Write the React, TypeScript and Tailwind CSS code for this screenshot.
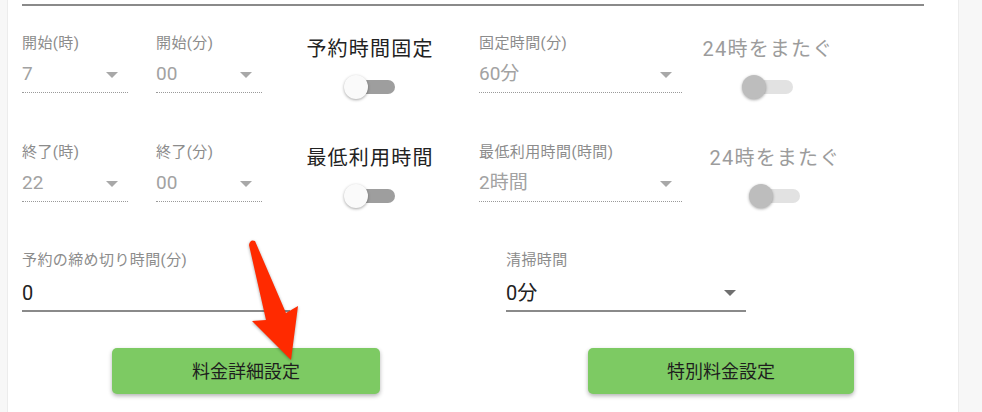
import React from "react";

const font = "font-['Roboto','Noto_Sans_CJK_JP',sans-serif]";

function Caret({ dark }: { dark?: boolean }) {
  return (
    <svg width="12" height="6" viewBox="0 0 12 6" className="mr-[10px] shrink-0">
      <path d="M0 0h12L6 6z" fill={dark ? "#6f6f6f" : "#a8a8a8"} />
    </svg>
  );
}

function DisabledSelect({ label, value, width }: { label: string; value: string; width: string }) {
  return (
    <div className={width}>
      <div className="text-[15px] leading-[16px] tracking-[0.4px] text-[#8c8c8c]">{label}</div>
      <div className="mt-[6px] flex h-[36px] items-center justify-between border-b border-dotted border-[#9a9a9a]">
        <span className="text-[19px] text-[#a2a2a2]">{value}</span>
        <Caret />
      </div>
    </div>
  );
}

function Switch({ disabled }: { disabled?: boolean }) {
  return (
    <div className="relative h-[26px] w-[52px]">
      <div
        className={`absolute left-[6px] top-[6px] h-[14px] w-[45px] rounded-full ${
          disabled ? "bg-[#e2e2e2]" : "bg-[#9e9e9e]"
        }`}
      />
      <div
        className={`absolute left-0 top-[1px] h-[24px] w-[24px] rounded-full shadow-[0_1px_3px_rgba(0,0,0,0.35)] ${
          disabled ? "bg-[#bdbdbd]" : "bg-[#fafafa]"
        }`}
      />
    </div>
  );
}

function ToggleGroup({ title, disabled, className }: { title: string; disabled?: boolean; className: string }) {
  return (
    <div className={`flex w-[160px] flex-col items-center ${className}`}>
      <div
        className={`mt-[2px] text-[20px] leading-[24px] tracking-[1.2px] ${
          disabled ? "text-[#9c9c9c]" : "text-[#222]"
        }`}
      >
        {title}
      </div>
      <div className="mt-[13px]">
        <Switch disabled={disabled} />
      </div>
    </div>
  );
}

export default function App() {
  return (
    <div className={`relative flex h-[412px] w-[982px] overflow-hidden bg-[#f7f7f7] ${font}`}>
      <div className="ml-[7px] w-[952px] border-x border-[#ececec] bg-white pl-[14px]">
        <div className="mt-[4px] h-[2px] w-[902px] bg-[#8a8a8a]" />

        <div className="mt-[29px] flex h-[109px] items-start">
          <DisabledSelect label="開始(時)" value="7" width="w-[106px]" />
          <div className="ml-[28px]">
            <DisabledSelect label="開始(分)" value="00" width="w-[106px]" />
          </div>
          <ToggleGroup title="予約時間固定" className="ml-[28px]" />
          <div className="ml-[29px]">
            <DisabledSelect label="固定時間(分)" value="60分" width="w-[203px]" />
          </div>
          <ToggleGroup title="24時をまたぐ" disabled className="ml-[6px]" />
        </div>

        <div className="flex h-[108px] items-start">
          <DisabledSelect label="終了(時)" value="22" width="w-[106px]" />
          <div className="ml-[28px]">
            <DisabledSelect label="終了(分)" value="00" width="w-[106px]" />
          </div>
          <ToggleGroup title="最低利用時間" className="ml-[28px]" />
          <div className="ml-[29px]">
            <DisabledSelect label="最低利用時間(時間)" value="2時間" width="w-[203px]" />
          </div>
          <ToggleGroup title="24時をまたぐ" disabled className="ml-[13px]" />
        </div>

        <div className="flex items-start">
          <div className="w-[268px]">
            <div className="text-[15px] leading-[16px] tracking-[0.4px] text-[#8c8c8c]">予約の締め切り時間(分)</div>
            <div className="mt-[8px] flex h-[36px] items-center border-b-2 border-[#8a8a8a]">
              <span className="text-[20px] text-[#222]">0</span>
            </div>
          </div>
          <div className="ml-[216px] w-[240px]">
            <div className="text-[15px] leading-[16px] tracking-[0.4px] text-[#8c8c8c]">清掃時間</div>
            <div className="mt-[8px] flex h-[36px] items-center justify-between border-b-2 border-[#8a8a8a]">
              <span className="text-[20px] text-[#222]">0分</span>
              <Caret dark />
            </div>
          </div>
        </div>

        <div className="mt-[36px] flex">
          <button
            type="button"
            className="ml-[90px] h-[46px] w-[268px] rounded-[5px] bg-[#7dca63] text-[18px] text-[#1e1e1e] shadow-[0_2px_4px_rgba(0,0,0,0.3)]"
          >
            料金詳細設定
          </button>
          <button
            type="button"
            className="ml-[208px] h-[46px] w-[266px] rounded-[5px] bg-[#7dca63] text-[18px] text-[#1e1e1e] shadow-[0_2px_4px_rgba(0,0,0,0.3)]"
          >
            特別料金設定
          </button>
        </div>
      </div>

      {/* callout arrow */}
      <svg
        className="pointer-events-none absolute left-0 top-0"
        width="982"
        height="412"
        viewBox="0 0 982 412"
      >
        <path
          d="M249 245 Q250 239 255 241 L286 313 L298 306 L291 360 L252 321 L266 320 Z"
          fill="#ff2a00"
          style={{ filter: "drop-shadow(0 1px 1.5px rgba(0,0,0,0.35))" }}
        />
      </svg>
    </div>
  );
}
